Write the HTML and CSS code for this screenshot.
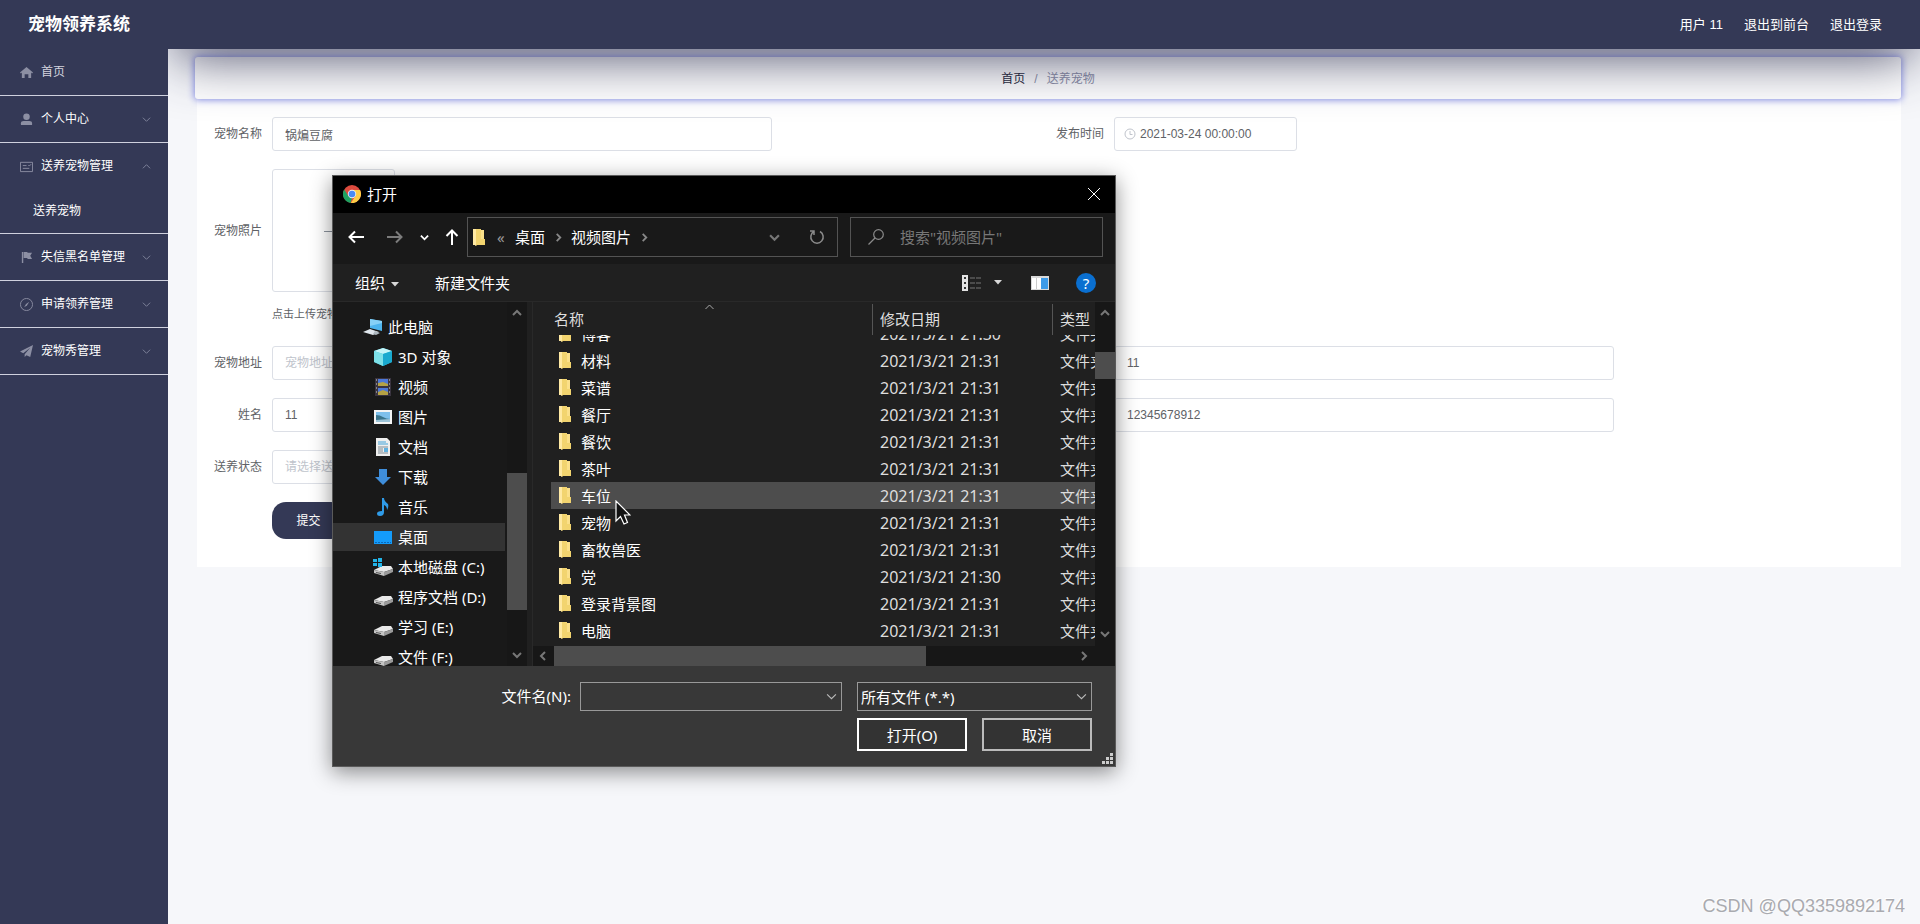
FILE: index.html
```html
<!DOCTYPE html>
<html lang="zh-CN">
<head>
<meta charset="utf-8">
<title>宠物领养系统</title>
<link rel="stylesheet" href="styles.css">
</head>
<body>
<svg class="defs" aria-hidden="true">
  <symbol id="down" viewBox="0 0 10 10"><path d="M1 3l4 4 4-4" fill="none" stroke="currentColor"/></symbol>
  <symbol id="up" viewBox="0 0 10 10"><path d="M1 7l4-4 4 4" fill="none" stroke="currentColor"/></symbol>
  <symbol id="bold-down" viewBox="0 0 10 10"><path d="M1 3l4 4 4-4" fill="none" stroke="currentColor" stroke-width="2"/></symbol>
  <symbol id="bold-up" viewBox="0 0 10 10"><path d="M1 7l4-4 4 4" fill="none" stroke="currentColor" stroke-width="2"/></symbol>
  <symbol id="bold-left" viewBox="0 0 10 10"><path d="M7 1L3 5l4 4" fill="none" stroke="currentColor" stroke-width="2"/></symbol>
  <symbol id="bold-right" viewBox="0 0 10 10"><path d="M3 1l4 4-4 4" fill="none" stroke="currentColor" stroke-width="2"/></symbol>
  <symbol id="caret" viewBox="0 0 8 5"><path d="M0 0h8L4 4.500z" fill="currentColor"/></symbol>
  <symbol id="folder" viewBox="0 0 12 17"><path d="M0 0h8v1h3v9h1v6H4l-1 1-1-1H0z" fill="#f2d46f"/><path d="M0 0h3v17l-1-1H0z" fill="#ffe9a3"/><path d="M8 1h3v9H8z" fill="#fbe08a"/></symbol>
  <symbol id="drive" viewBox="0 0 20 14"><path d="M1 8l8-4h9l2 3-9 3z" fill="#e9e9e9"/><path d="M1 8l10 2v4L1 11z" fill="#c4c4c4"/><path d="M11 10l9-3v3l-9 4z" fill="#9b9b9b"/><path d="M3 10l5 1v1l-5-1z" fill="#555"/></symbol>
</svg>

<header class="topbar">
  <h1 class="brand">宠物领养系统</h1>
  <nav class="top-links"><span>用户 11</span><a href="#">退出到前台</a><a href="#">退出登录</a></nav>
</header>

<div class="layout">
  <nav class="sidebar">
    <div class="group"><a class="item muted" href="#">
      <svg class="mi" viewBox="0 0 14 14"><path d="M7 1L0 7l1 1 1-1v6h3V9h4v4h3V7l1 1 1-1z"/></svg><span>首页</span></a></div>
    <div class="group"><button class="item">
      <svg class="mi" viewBox="0 0 14 14"><circle cx="7" cy="4" r="3.500"/><path d="M1 13V11q0-2.500 3-2.500h6q3 0 3 2.500v2z"/></svg><span>个人中心</span><svg class="arr"><use href="#down"/></svg></button></div>
    <div class="group"><button class="item">
      <svg class="mi" viewBox="0 0 14 14" fill="none" stroke="#8c8fa3"><path d="M.5 2.500h13v10H.5zM3 6h4M3 9h7M9 5.500l1 1 2-2" /></svg><span>送养宠物管理</span><svg class="arr"><use href="#up"/></svg></button>
      <a class="sub" href="#">送养宠物</a></div>
    <div class="group"><button class="item">
      <svg class="mi" viewBox="0 0 14 14"><path d="M2 1h1.500v12H2zM4 1h4v1h5l-2 3 2 3.500H8v-1H4z"/></svg><span>失信黑名单管理</span><svg class="arr"><use href="#down"/></svg></button></div>
    <div class="group"><button class="item">
      <svg class="mi" viewBox="0 0 14 14" fill="none" stroke="#8c8fa3"><circle cx="7" cy="7" r="6.500"/><path d="M10 4L7.500 8 4.500 10l2-3.500z" fill="#8c8fa3" stroke="none"/></svg><span>申请领养管理</span><svg class="arr"><use href="#down"/></svg></button></div>
    <div class="group"><button class="item">
      <svg class="mi" viewBox="0 0 14 14"><path d="M14 0L0 7l3.500 2L11 3 5 10v3l2-2 4 2z"/></svg><span>宠物秀管理</span><svg class="arr"><use href="#down"/></svg></button></div>
  </nav>

  <main class="main">
    <nav class="crumbs"><a href="#">首页</a><i>/</i><span>送养宠物</span></nav>
    <form class="card">
      <div class="field"><label for="name">宠物名称</label><input class="text" id="name" value="锅煸豆腐"></div>
      <div class="field"><label for="date">发布时间</label><div class="date">
        <svg viewBox="0 0 12 12" fill="none" stroke="#c0c4cc"><circle cx="6" cy="6" r="5"/><path d="M6 3v3.500h2.500"/></svg>
        <input id="date" value="2021-03-24 00:00:00"></div></div>
      <div class="field wide"><label for="photo">宠物照片</label>
        <button class="upload" type="button" id="photo" aria-label="上传"><svg viewBox="0 0 20 20" stroke="#8c939d" fill="none"><path d="M0 10.500h20M10.500 0v20"/></svg></button></div>
      <p class="hint wide">点击上传宠物照片</p>
      <div class="field"><label for="addr">宠物地址</label><input class="text" id="addr" placeholder="宠物地址"></div>
      <div class="field"><label for="acct">账号</label><input class="text" id="acct" value="11"></div>
      <div class="field"><label for="person">姓名</label><input class="text" id="person" value="11"></div>
      <div class="field"><label for="phone">手机</label><input class="text" id="phone" value="12345678912"></div>
      <div class="field wide"><label for="state">送养状态</label><select class="text pick" id="state"><option>请选择送养状态</option></select></div>
      <div class="actions wide"><button class="submit" type="button">提交</button></div>
    </form>
    <p class="mark">CSDN @QQ3359892174</p>
  </main>
</div>

<section class="dialog" role="dialog" aria-label="打开">
  <div class="title">
    <svg class="chrome" viewBox="0 0 18 18"><circle cx="9" cy="9" r="9" fill="#dd4b3e"/><path d="M1.200 4.500L5.500 11.200 9 13l-1.500 5A9 9 0 0 1 1.200 4.500z" fill="#1da261"/><path d="M9 5h8A9 9 0 0 1 7.800 18L12.500 11z" fill="#ffcd45"/><circle cx="9" cy="9" r="4.200" fill="#f1f1f1"/><circle cx="9" cy="9" r="3.300" fill="#4a8af4"/></svg>
    <h2>打开</h2>
    <button class="close" aria-label="关闭"><svg viewBox="0 0 14 14" stroke="#fff" fill="none"><path d="M1 1l12 12M13 1L1 13"/></svg></button>
  </div>
  <div class="navbar">
    <div class="arrows">
      <svg class="go" viewBox="0 0 16 16"><path d="M16 8H2M7 2.500L1.500 8 7 13.500"/></svg>
      <svg class="go dim" viewBox="0 0 16 16"><path d="M0 8h14M9 2.500L14.500 8 9 13.500"/></svg>
      <svg class="small"><use href="#bold-down"/></svg>
      <svg class="go" viewBox="0 0 16 16"><path d="M8 16V2M2.500 7L8 1.500 13.500 7"/></svg>
    </div>
    <div class="address">
      <svg class="folder"><use href="#folder"/></svg><span class="more">«</span><span>桌面</span><svg class="sep"><use href="#bold-right"/></svg><span>视频图片</span><svg class="sep"><use href="#bold-right"/></svg>
      <svg class="drop"><use href="#bold-down"/></svg>
      <svg class="reload" viewBox="0 0 16 16" fill="none" stroke="#8b8b8b" stroke-width="1.500"><path d="M5 2.500A6.200 6.200 0 1 0 11 2.500M5 6V2H1"/></svg>
    </div>
    <div class="search">
      <svg viewBox="0 0 16 16" fill="none" stroke="#8b8b8b" stroke-width="1.200"><circle cx="10.500" cy="5.500" r="4.800"/><path d="M7 9L.5 15.500"/></svg>
      <input aria-label="搜索" placeholder="搜索&quot;视频图片&quot;">
    </div>
  </div>
  <div class="toolbar">
    <button>组织<svg class="caret"><use href="#caret"/></svg></button>
    <button class="new">新建文件夹</button>
    <svg class="view" viewBox="0 0 19 16"><path d="M0 0h6v16H0z" fill="#e3e3e3"/><path d="M2 2h2v2H2zM2 7h2v2H2zM2 12h2v2H2z" fill="#333"/><path d="M8 3h11M8 8h11M8 13h11" stroke="#777" stroke-dasharray="5 1"/></svg>
    <svg class="caret"><use href="#caret"/></svg>
    <svg class="pane" viewBox="0 0 18 14"><path d="M0 0h18v14H0z" fill="#d9d9d9"/><path d="M1 2h9v11H1z" fill="#fff"/><path d="M10 2h7v11h-7z" fill="#3d9be9"/><path d="M5.500 2v11" stroke="#ccc"/></svg>
    <button class="help" aria-label="帮助">?</button>
  </div>
  <div class="body">
    <ul class="tree">
      <li class="root"><svg viewBox="0 0 20 18"><path d="M7 1l12 2v10L7 10z" fill="#4db4ee"/><path d="M7 1l12 2v2L7 8z" fill="#86d0f7"/><path d="M0 14l7-3 9 3-6 3z" fill="#dfe6ec"/><path d="M12 13l5 2-4 2-3-1z" fill="#aeb8c0"/></svg>此电脑</li>
      <li><svg viewBox="0 0 20 18"><path d="M1 3l9-3 9 3v11l-9 4-9-4z" fill="#38c5dc"/><path d="M1 3l9-3 9 3-9 3z" fill="#c4f4f8"/><path d="M1 3l9 3v12l-9-4z" fill="#7ce0e8"/><path d="M10 6l9-3v11l-9 4z" fill="#19a9cf"/></svg>3D 对象</li>
      <li><svg viewBox="0 0 20 18"><path d="M2 0h16v18H2z" fill="#3a3440"/><path d="M5 1h10v7H5zM5 10h10v7H5z" fill="#4d78d8"/><path d="M5 5l5-1 5 2v2H5zM5 14l5-2 5 2v3H5z" fill="#b5a244"/><path d="M3.500 1v16M16.500 1v16" stroke="#888" stroke-dasharray="2 2"/></svg>视频</li>
      <li><svg viewBox="0 0 20 18"><path d="M1 2h18v14H1z" fill="#f4f4f4"/><path d="M3 4h14v10H3z" fill="#7ec0ec"/><path d="M3 7q4 0 7 2t7 2v3H3z" fill="#39748c"/><path d="M3 12l14-1v3H3z" fill="#9cc4d8"/></svg>图片</li>
      <li><svg viewBox="0 0 20 18"><path d="M3 0h11l3 3v15H3z" fill="#eee"/><path d="M5 4h8M5 6h10" stroke="#45a3d8"/><path d="M5 9h10M5 11h5M5 13h5M5 15h10" stroke="#7f8b94"/><path d="M11 10h4v4h-4z" fill="#61b1df"/></svg>文档</li>
      <li><svg viewBox="0 0 20 18"><path d="M6 1h8v8h4l-8 8-8-8h4z" fill="#3f8edb"/></svg>下载</li>
      <li><svg viewBox="0 0 20 18"><path d="M9 0h2q0 3 4 6 1 3-1 6 0-4-3-5v7q0 4-4 4-3 0-3-2.500Q4 13 9 13z" fill="#2f9be8"/></svg>音乐</li>
      <li class="on"><svg viewBox="0 0 20 18"><path d="M1 3h18v13H1z" fill="#149bfa"/><path d="M2 14.500h16" stroke="#0a68b8" stroke-dasharray="2 1"/></svg>桌面</li>
      <li><svg viewBox="0 0 20 18"><use href="#drive" x="0" y="4" width="20" height="14"/><path d="M0 1h4v3H0zM5 0h4v4H5zM0 5h4v3H0zM5 5h4v4H5z" fill="#22b4e8"/></svg>本地磁盘 (C:)</li>
      <li><svg viewBox="0 0 20 18"><use href="#drive" x="0" y="4" width="20" height="14"/></svg>程序文档 (D:)</li>
      <li><svg viewBox="0 0 20 18"><use href="#drive" x="0" y="4" width="20" height="14"/></svg>学习 (E:)</li>
      <li><svg viewBox="0 0 20 18"><use href="#drive" x="0" y="4" width="20" height="14"/></svg>文件 (F:)</li>
    </ul>
    <div class="vbar tree-bar"><svg><use href="#bold-up"/></svg><i></i><svg><use href="#bold-down"/></svg></div>
    <div class="list">
      <svg class="sort"><use href="#up"/></svg>
      <table>
        <thead><tr><th>名称</th><th>修改日期</th><th>类型</th></tr></thead>
        <tbody>
          <tr><td><svg class="folder"><use href="#folder"/></svg>博客</td><td>2021/3/21 21:30</td><td>文件夹</td></tr>
          <tr><td><svg class="folder"><use href="#folder"/></svg>材料</td><td>2021/3/21 21:31</td><td>文件夹</td></tr>
          <tr><td><svg class="folder"><use href="#folder"/></svg>菜谱</td><td>2021/3/21 21:31</td><td>文件夹</td></tr>
          <tr><td><svg class="folder"><use href="#folder"/></svg>餐厅</td><td>2021/3/21 21:31</td><td>文件夹</td></tr>
          <tr><td><svg class="folder"><use href="#folder"/></svg>餐饮</td><td>2021/3/21 21:31</td><td>文件夹</td></tr>
          <tr><td><svg class="folder"><use href="#folder"/></svg>茶叶</td><td>2021/3/21 21:31</td><td>文件夹</td></tr>
          <tr class="on"><td><svg class="folder"><use href="#folder"/></svg>车位<svg class="cursor" viewBox="0 0 16 25"><path d="M1 1v20l4.500-4.500L9 24l3.500-1.500L9.500 15H15z" fill="#111" stroke="#fff" stroke-width="1.200"/></svg></td><td>2021/3/21 21:31</td><td>文件夹</td></tr>
          <tr><td><svg class="folder"><use href="#folder"/></svg>宠物</td><td>2021/3/21 21:31</td><td>文件夹</td></tr>
          <tr><td><svg class="folder"><use href="#folder"/></svg>畜牧兽医</td><td>2021/3/21 21:31</td><td>文件夹</td></tr>
          <tr><td><svg class="folder"><use href="#folder"/></svg>党</td><td>2021/3/21 21:30</td><td>文件夹</td></tr>
          <tr><td><svg class="folder"><use href="#folder"/></svg>登录背景图</td><td>2021/3/21 21:31</td><td>文件夹</td></tr>
          <tr><td><svg class="folder"><use href="#folder"/></svg>电脑</td><td>2021/3/21 21:31</td><td>文件夹</td></tr>
        </tbody>
      </table>
      <div class="hbar"><svg><use href="#bold-left"/></svg><i></i><svg><use href="#bold-right"/></svg></div>
    </div>
    <div class="vbar list-bar"><svg><use href="#bold-up"/></svg><i></i><svg><use href="#bold-down"/></svg></div>
  </div>
  <div class="foot">
    <label for="file">文件名(N):</label>
    <div class="combo"><input id="file"><svg><use href="#down"/></svg></div>
    <div class="combo type"><select aria-label="文件类型"><option>所有文件 (*.*)</option></select><svg><use href="#down"/></svg></div>
    <div class="buttons"><button class="primary">打开(O)</button><button>取消</button></div>
    <svg class="grip" viewBox="0 0 11 11" fill="#ccc"><path d="M8 0h3v3H8zM4 4h3v3H4zM8 4h3v3H8zM0 8h3v3H0zM4 8h3v3H4zM8 8h3v3H8z"/></svg>
  </div>
</section>
</body>
</html>
```
FILE: styles.css
```css
* { box-sizing: border-box; }
body {
  margin: 0;
  min-height: 100vh;
  display: flex;
  flex-direction: column;
  position: relative;
  overflow: hidden;
  background: #f6f7fa;
  color: #606266;
  font: 12px/18px "Liberation Sans", "Noto Sans CJK SC", sans-serif;
}
a { color: inherit; text-decoration: none; }
button, input, select { font: inherit; color: inherit; margin: 0; padding: 0; border: 0; background: none; outline: 0; }
h1, h2, p, ul { margin: 0; padding: 0; }
i { font-style: normal; }
svg { flex: none; }
.defs { position: absolute; width: 0; height: 0; }

.topbar {
  height: 49px;
  display: flex;
  align-items: center;
  justify-content: space-between;
  padding: 1px 38px 0 28px;
  background: #343956;
  color: #fff;
}
.brand { font-size: 17px; line-height: 24px; }
.top-links { display: flex; gap: 21px; font-size: 13px; }

.layout { flex: 1; display: flex; }
.sidebar { width: 168px; flex: none; background: #343956; color: #fff; }
.group { border-bottom: 1px solid #cfd1de; }
.item { display: flex; align-items: center; gap: 8px; width: 100%; height: 46px; padding: 0 17px 0 20px; text-align: left; }
.item span { flex: 1; }
.muted { color: #d3d4de; }
.mi { width: 13px; height: 13px; fill: #8c8fa3; }
.mi[fill="none"] { fill: none; }
.arr { width: 9px; height: 9px; color: #8589a0; }
.sub { display: flex; align-items: center; height: 44px; padding-left: 33px; }

.main { flex: 1; display: flex; flex-direction: column; position: relative; overflow: hidden; padding: 8px 19px 8px 27px; }
.main::before {
  content: "";
  position: absolute;
  inset: -60px 8px auto 8px;
  height: 60px;
  z-index: 1;
  box-shadow: 0 8px 54px rgba(40, 42, 75, .85);
}
.crumbs {
  display: flex;
  align-items: center;
  justify-content: center;
  gap: 9px;
  height: 42px;
  padding-top: 2px;
  border-radius: 3px;
  background: #fff;
  box-shadow: 0 0 7px 1px #8c94ea;
  position: relative;
  color: #8d90a8;
}
.crumbs a { color: #26283a; }
.card {
  display: grid;
  grid-template-columns: 1fr 1fr;
  row-gap: 18px;
  margin: 0 0 0 2px;
  padding: 18px 10px 28px;
  background: #fff;
}
.wide { grid-column: 1 / -1; }
.field { display: flex; align-items: center; }
.field label { width: 65px; padding-right: 10px; text-align: right; }
.text, .date { height: 34px; border: 1px solid #dcdfe6; border-radius: 3px; background: #fff; }
.text { width: 500px; padding: 0 12px; }
.text::placeholder, .pick { color: #c0c4cc; }
.pick { appearance: none; }
.date { display: flex; align-items: center; gap: 4px; width: 183px; padding-left: 9px; }
.date svg { width: 12px; height: 12px; }
.date input { width: 140px; }
.upload { width: 123px; height: 123px; border: 1px solid #dcdfe6; border-radius: 3px; display: grid; place-items: center; }
.upload svg { width: 20px; height: 20px; }
.hint { padding: 0 0 5px 65px; margin-top: -5px; font-size: 11px; line-height: 18px; }
.actions { padding-left: 65px; }
.submit { width: 73px; height: 37px; border-radius: 14px; background: #343956; color: #fff; }
.mark {
  margin-top: auto;
  margin-right: -4px;
  text-align: right;
  font-size: 18px;
  line-height: 20px;
  color: #a9aaaf;
  text-shadow: -1px -1px 0 #fff;
}

.dialog {
  position: absolute;
  left: 332px;
  top: 175px;
  width: 784px;
  z-index: 5;
  border: 1px solid #5a5a5a;
  background: #202020;
  box-shadow: 0 5px 20px rgba(0, 0, 0, .45);
  color: #fff;
  font: 15px/20px "Noto Sans", "Noto Sans CJK SC", sans-serif;
}
.title { display: flex; align-items: center; gap: 6px; height: 37px; padding: 0 14px 2px 10px; background: #000; }
.title h2 { flex: 1; font-size: 15px; font-weight: 400; }
.chrome { width: 18px; height: 18px; }
.close { display: grid; place-items: center; }
.close svg { width: 14px; height: 14px; }

.navbar { display: flex; align-items: flex-start; gap: 12px; height: 51px; padding: 4px 12px 0 15px; background: #191919; }
.arrows { display: flex; align-items: center; justify-content: space-between; width: 112px; height: 40px; }
.go { width: 16px; height: 16px; fill: none; stroke: #fff; stroke-width: 2; }
.dim { stroke: #7c7c7c; }
.small { width: 9px; height: 9px; margin: 0 -8px 0 -7px; }
.address, .search { display: flex; align-items: center; height: 40px; border: 1px solid #535353; }
.address { flex: 1; margin-left: -5px; padding: 0 12px 0 5px; }
.folder { width: 12px; height: 17px; }
.more { width: 30px; padding-left: 12px; color: #999; }
.sep { width: 9px; height: 9px; margin: 0 8px 0 9px; color: #888; }
.drop { width: 11px; height: 11px; margin-left: auto; color: #777; }
.reload { width: 16px; height: 16px; margin-left: 29px; }
.search { width: 253px; gap: 16px; padding-left: 17px; }
.search svg { width: 16px; height: 16px; }
.search input { width: 180px; }
.search input::placeholder { color: #777; opacity: 1; }

.toolbar { display: flex; align-items: center; height: 38px; padding: 0 19px 0 22px; border-bottom: 1px solid #292929; }
.caret { width: 8px; height: 5px; color: #d8d8d8; }
.toolbar button .caret { margin: 0 0 2px 6px; }
.new { margin: 0 auto 0 36px; }
.view { width: 19px; height: 16px; margin-right: 13px; }
.pane { width: 18px; height: 14px; margin: 0 27px 0 29px; }
.toolbar .help { width: 20px; height: 20px; border-radius: 50%; background: #0a6fd0; }

.body { display: flex; height: 364px; }
.tree { flex: none; width: 174px; padding-top: 11px; overflow: hidden; list-style: none; background: #191919; }
.tree li { display: flex; align-items: center; gap: 5px; height: 28px; margin: 0 2px 2px 0; padding-left: 40px; white-space: nowrap; }
.tree .root { padding-left: 30px; }
.tree svg { width: 20px; height: 18px; }
.on { background: #333; }
.vbar { display: flex; flex: none; flex-direction: column; align-items: center; width: 20px; padding: 6px 0; background: #171717; color: #777; }
.vbar svg, .hbar svg { width: 10px; height: 10px; }
.vbar i { width: 20px; background: #4d4d4d; }
.tree-bar i { height: 137px; margin: 155px 0 auto; }
.list-bar { padding-bottom: 27px; }
.list-bar i { height: 27px; margin: 34px 0 auto; }
.list { flex: 1; min-width: 0; display: flex; flex-direction: column; position: relative; margin-left: 5px; border-left: 1px solid #292929; }
.sort { position: absolute; left: 171px; top: 0; width: 11px; height: 10px; color: #aaa; }
table { display: block; padding-left: 18px; }
thead { display: block; height: 33px; }
tbody { display: flex; flex-direction: column; justify-content: flex-end; height: 311px; padding-bottom: 2px; overflow: hidden; }
tr { display: grid; grid-template-columns: 321px 180px 1fr; flex: none; height: 27px; }
th { height: 31px; margin-top: 2px; padding-top: 5px; border-left: 1px solid #555; padding-left: 7px; text-align: left; font-weight: 400; color: #dedede; white-space: nowrap; }
th:first-child { padding-left: 3px; border-left: 0; }
td { display: flex; align-items: center; min-width: 0; overflow: hidden; padding: 0 0 0 8px; color: #ddd; white-space: nowrap; }
td:first-child { position: relative; gap: 10px; overflow: visible; color: #fff; }
td:nth-child(2) { font-size: 16px; }
tr.on { background: #4d4d4d; }
.cursor { position: absolute; left: 64px; top: 18px; width: 16px; height: 25px; z-index: 2; }
.hbar { display: flex; align-items: center; height: 20px; padding: 0 6px 0 5px; background: #171717; color: #777; }
.hbar i { width: 372px; height: 20px; margin: 0 auto 0 6px; background: #4d4d4d; }

.foot {
  position: relative;
  display: grid;
  grid-template-columns: 1fr 262px 235px;
  gap: 7px 15px;
  align-content: start;
  height: 100px;
  padding: 16px 23px 0 0;
  background: #383838;
}
.foot label { line-height: 28px; text-align: right; margin-right: -6px; }
.combo { display: grid; align-items: center; border: 1px solid #999; height: 29px; }
.combo > * { grid-area: 1 / 1; }
.combo input, .combo select { width: 100%; height: 27px; padding: 0 3px; appearance: none; }
.combo svg { width: 11px; height: 11px; margin-right: 4px; justify-self: end; color: #bbb; pointer-events: none; }
.type { background: #333; }
.buttons { grid-column: 3; display: grid; grid-template-columns: 1fr 1fr; gap: 15px; }
.buttons button { height: 33px; border: 2px solid #bbb; background: #333; }
.buttons .primary { border-color: #fff; }
.grip { position: absolute; right: 2px; bottom: 2px; width: 11px; height: 11px; }
```
